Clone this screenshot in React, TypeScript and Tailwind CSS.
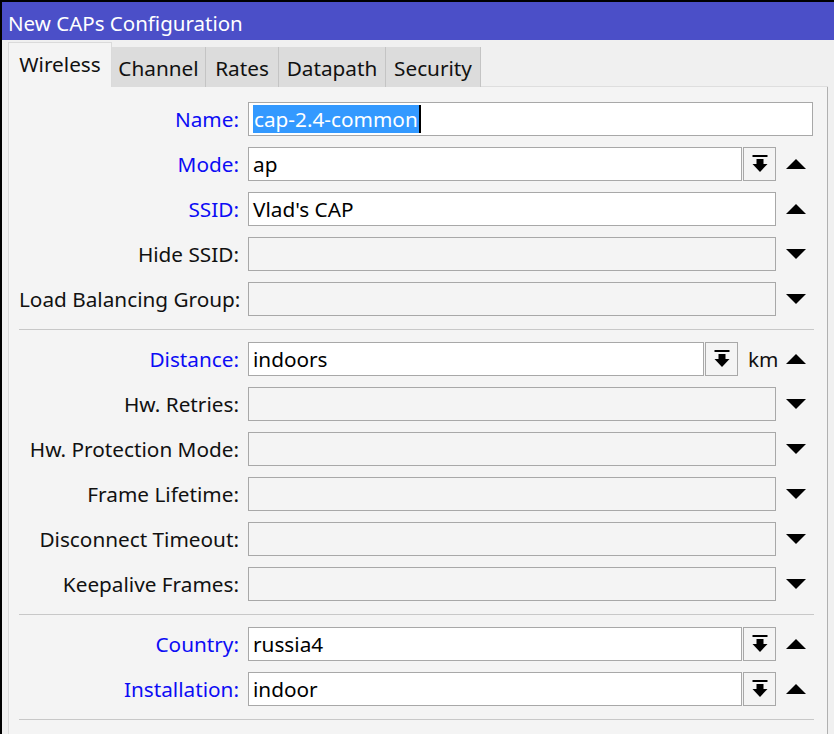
import type { ReactNode } from 'react'

type Kind = 'text' | 'empty'
type Field = {
  label: string
  value?: string
  blue?: boolean
  kind: Kind
  drop?: boolean
  unit?: string
  arrow: 'up' | 'down' | 'none'
  selected?: boolean
}

const sections: Field[][] = [
  [
    { label: 'Name:', value: 'cap-2.4-common', blue: true, kind: 'text', arrow: 'none', selected: true },
    { label: 'Mode:', value: 'ap', blue: true, kind: 'text', drop: true, arrow: 'up' },
    { label: 'SSID:', value: "Vlad's CAP", blue: true, kind: 'text', arrow: 'up' },
    { label: 'Hide SSID:', kind: 'empty', arrow: 'down' },
    { label: 'Load Balancing Group:', kind: 'empty', arrow: 'down' },
  ],
  [
    { label: 'Distance:', value: 'indoors', blue: true, kind: 'text', drop: true, unit: 'km', arrow: 'up' },
    { label: 'Hw. Retries:', kind: 'empty', arrow: 'down' },
    { label: 'Hw. Protection Mode:', kind: 'empty', arrow: 'down' },
    { label: 'Frame Lifetime:', kind: 'empty', arrow: 'down' },
    { label: 'Disconnect Timeout:', kind: 'empty', arrow: 'down' },
    { label: 'Keepalive Frames:', kind: 'empty', arrow: 'down' },
  ],
  [
    { label: 'Country:', value: 'russia4', blue: true, kind: 'text', drop: true, arrow: 'up' },
    { label: 'Installation:', value: 'indoor', blue: true, kind: 'text', drop: true, arrow: 'up' },
  ],
]

const tabs = [
  { name: 'Wireless', w: 'w-[104px]' },
  { name: 'Channel', w: 'w-[94px]' },
  { name: 'Rates', w: 'w-[73px]' },
  { name: 'Datapath', w: 'w-[107px]' },
  { name: 'Security', w: 'w-[95px]' },
]

function Triangle({ dir }: { dir: 'up' | 'down' }) {
  return (
    <svg width="20" height="10" viewBox="0 0 20 10" className="block">
      {dir === 'up' ? <polygon points="10,0 20,10 0,10" fill="#000" /> : <polygon points="0,0 20,0 10,10" fill="#000" />}
    </svg>
  )
}

function DropIcon() {
  return (
    <svg width="16" height="18" viewBox="0 0 16 18" className="block">
      <rect x="0.5" y="0" width="15" height="2" fill="#000" />
      <rect x="4.5" y="4" width="7" height="5" fill="#000" />
      <polygon points="0.5,9 15.5,9 8,17" fill="#000" />
    </svg>
  )
}

function Input({ f, children }: { f: Field; children?: ReactNode }) {
  const bg = f.kind === 'text' ? 'bg-white' : 'bg-[#f4f4f4]'
  return (
    <div className={`flex-1 h-[34px] border border-[#a8a8a8] ${bg} flex items-center pl-[4px] text-black`}>
      {children}
    </div>
  )
}

function Row({ f }: { f: Field }) {
  return (
    <div className="flex items-center h-[34px]">
      <div className={`w-[220px] text-right whitespace-nowrap ${f.blue ? 'text-[#0c0cf4]' : 'text-[#111]'}`}>{f.label}</div>
      <div className="w-[9px]" />
      <div className={`flex items-center ${f.arrow === 'none' ? 'w-[565px]' : 'w-[528px]'}`}>
        <Input f={f}>
          {f.selected ? (
            <span className="bg-[#3399ff] text-white leading-[28px] pl-[1px] pr-[1px] border-r-2 border-black">{f.value}</span>
          ) : (
            f.value
          )}
        </Input>
        {f.drop && (
          <div className="w-[33px] h-[34px] ml-[1px] border border-[#a8a8a8] bg-[#f4f4f4] flex items-center justify-center">
            <DropIcon />
          </div>
        )}
        {f.unit && <div className="w-[38px] pl-[10px] text-[#111]">{f.unit}</div>}
      </div>
      {f.arrow !== 'none' && (
        <div className="w-[37px] flex pl-[10px]">
          <Triangle dir={f.arrow} />
        </div>
      )}
    </div>
  )
}

export default function App() {
  return (
    <div
      className="w-[834px] h-[734px] overflow-hidden bg-[#f0f0f0] border-t-2 border-l-2 border-black text-[20.75px] leading-none"
      style={{ fontFamily: '"Noto Sans", "Open Sans", sans-serif' }}
    >
      <div className="h-[38px] bg-[#4b4fc8] text-white text-[20.5px] flex items-center pl-[6px] pt-[4px]">New CAPs Configuration</div>
      <div className="pl-[6px] pr-[6px]">
        <div className="flex items-end h-[47px] pt-[2px]">
          {tabs.map((t, i) =>
            i === 0 ? (
              <div key={t.name} className={`h-[45px] ${t.w} bg-[#f4f4f4] border-l border-r border-t border-[#dadada] flex items-center justify-center pb-[1px] text-[#111]`}>
                {t.name}
              </div>
            ) : (
              <div key={t.name} className={`h-[40px] ${t.w} bg-[#dcdcdc] border-r border-[#c4c4c4] flex items-center justify-center pt-[3px] text-[#111]`}>
                {t.name}
              </div>
            ),
          )}
          <div className="flex-1 h-[1px] bg-[#dedede]" />
        </div>
        <div className="bg-[#f4f4f4] border-l border-r border-[#b0b0b0] border-l-[#dadada] h-[700px] pl-[10px] pt-[15px]">
          {sections.map((s, si) => (
            <div key={si}>
              <div className="flex flex-col gap-[11px]">
                {s.map((f) => (
                  <Row key={f.label} f={f} />
                ))}
              </div>
              <div className="mt-[13px] mb-[12px] mr-[13px] h-[1px] bg-[#c8c8c8]" />
            </div>
          ))}
        </div>
      </div>
    </div>
  )
}
